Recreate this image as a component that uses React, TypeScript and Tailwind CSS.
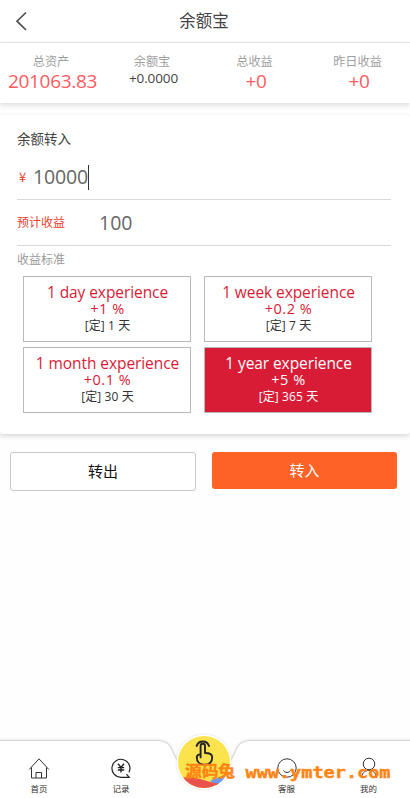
import React, { useState } from "react";

const FONT = "font-['Open_Sans','Noto_Sans_CJK_SC',sans-serif]";

type Stat = { label: string; value: string; plain?: boolean };

const stats: Stat[] = [
  { label: "总资产", value: "201063.83" },
  { label: "余额宝", value: "+0.0000", plain: true },
  { label: "总收益", value: "+0" },
  { label: "昨日收益", value: "+0" },
];

const plans = [
  { name: "1 day experience", rate: "+1 %", term: "[定] 1 天" },
  { name: "1 week experience", rate: "+0.2 %", term: "[定] 7 天" },
  { name: "1 month experience", rate: "+0.1 %", term: "[定] 30 天" },
  { name: "1 year experience", rate: "+5 %", term: "[定] 365 天" },
];

function Header() {
  return (
    <header className="grid h-[43px] grid-cols-[44px_1fr_46px] items-center border-b border-[#e7e7e7] bg-white">
      <button className="pl-[15px]" aria-label="返回">
        <svg width="12" height="20" viewBox="0 0 12 20" fill="none" stroke="#505050" strokeWidth="1.7">
          <path d="M11 1.500 2 10.200 11 19" />
        </svg>
      </button>
      <h1 className="pb-px text-center text-[16.500px] leading-6 text-[#444]">余额宝</h1>
    </header>
  );
}

function Stats() {
  return (
    <section className="grid h-[60px] grid-cols-[105px_97px_108px_98px] bg-white pt-[10px] text-center shadow-[0_2px_5px_rgba(0,0,0,0.14)]">
      {stats.map((s) => (
        <div key={s.label} className="flex flex-col items-center whitespace-nowrap">
          <span className="h-[17px] pr-[3px] text-[12.200px] leading-[17px] text-[#a0a0a0]">{s.label}</span>
          {s.plain ? (
            <span className="text-[13.500px] leading-[17px] tracking-[-0.1px] text-[#444]">{s.value}</span>
          ) : (
            <span className="text-[19px] leading-[23px] tracking-[-0.3px] text-[#ff5b60]">{s.value}</span>
          )}
        </div>
      ))}
    </section>
  );
}

function Plans() {
  const [selected, setSelected] = useState(3);
  return (
    <div className="ml-[6px] grid grid-cols-[168px_168px] gap-x-[13px] gap-y-[5px]">
      {plans.map((p, i) => {
        const on = i === selected;
        return (
          <button
            key={p.name}
            onClick={() => setSelected(i)}
            className={
              "flex h-[66px] flex-col items-center border border-[#b9b9b9] pt-[7px] pl-px whitespace-nowrap " +
              (on ? "bg-[#d91c36] text-white" : "bg-white text-[#d91c36]")
            }
          >
            <span className="text-[15.500px] leading-[17px] tracking-[-0.08px]">{p.name}</span>
            <span className="text-[14.500px] leading-[15px] tracking-[0.5px]">{p.rate}</span>
            <span className={"pt-px text-[12px] leading-[17px] tracking-[0.1px] " + (on ? "text-white" : "text-[#333]")}>
              {p.term}
            </span>
          </button>
        );
      })}
    </div>
  );
}

function HomeIcon() {
  return (
    <svg width="22" height="22" viewBox="0 0 22 22" fill="none" stroke="#333" strokeWidth="1">
      <path d="M1.200 12.500 11 1.800l9.800 10.700M3.500 10.500V21h15V10.500M8 21v-5.500h5.500V21" />
    </svg>
  );
}

function RecordIcon() {
  return (
    <svg width="22" height="22" viewBox="0 0 22 22" fill="none" stroke="#222" strokeWidth="1.200">
      <path d="M19 15.300A9 9 0 1 0 11 20.300h8.200l-2.800-3.200" />
      <path d="m8 6.800 3 3.700 3-3.700M11 10.500v5M7.800 10.600h6.400M7.800 13h6.400" strokeWidth="1.400" />
    </svg>
  );
}

function ServiceIcon() {
  return (
    <svg width="22" height="22" viewBox="0 0 22 22" fill="none" stroke="#333" strokeWidth="1">
      <circle cx="11" cy="11" r="9.200" />
      <path d="M7.500 13.500c1 2.600 6 2.600 7 0" />
    </svg>
  );
}

function MeIcon() {
  return (
    <svg width="22" height="22" viewBox="0 0 22 22" fill="none" stroke="#333" strokeWidth="1">
      <circle cx="11" cy="7" r="5.800" />
      <path d="M3.500 21c0-4 3-7.800 7.500-7.800s7.500 3.800 7.500 7.800" />
    </svg>
  );
}

function Tab({ icon, label }: { icon: React.ReactNode; label: string }) {
  return (
    <a className="flex flex-col items-center gap-[4px] pt-[21px]">
      {icon}
      <span className="text-[8.500px] leading-[12px] text-[#333]">{label}</span>
    </a>
  );
}

function TouchBadge() {
  return (
    <svg width="56" height="56" viewBox="0 0 56 56" className="drop-shadow-[0_0_1px_rgba(0,0,0,0.15)]">
      <defs>
        <clipPath id="disc">
          <circle cx="28" cy="28" r="26" />
        </clipPath>
      </defs>
      <circle cx="28" cy="28" r="27.500" fill="#fff" />
      <g clipPath="url(#disc)">
        <path d="M0 0h56v56H0z" fill="#fbe34d" />
        <path d="M34 47q8-5 18-5l-6 14z" fill="#6b9cf0" />
        <path d="M0 44q16-2 26 1.500T44 50v6H0z" fill="#e9534b" />
      </g>
      <g fill="none" stroke="#222" strokeWidth="1.900" strokeLinecap="round" strokeLinejoin="round">
        <path d="M20.600 12a6.500 6.500 0 0 1 12.400 0" />
        <path d="M24.600 22V12a2.200 2.200 0 0 1 4.400 0v7c4.500 0 7.200.8 7.200 4.200 0 5.200-3 7.600-7.800 7.600s-7.600-3.200-7.600-7.400c0-2 1.800-3.200 3.800-3v3" />
      </g>
    </svg>
  );
}

function TabBar() {
  return (
    <nav className="relative h-[62px]">
      <svg className="absolute inset-x-0 -top-[4px]" width="410" height="66" viewBox="0 0 410 66">
        <path
          d="M-2 8.500H156C173 8.500 171 19 177 28C183 43 191 56 204 56S225 43 231 28C237 19 235 8.500 252 8.500H412V70H-2Z"
          fill="#fff"
          stroke="#d6d6d6"
          strokeWidth="1.100"
          className="drop-shadow-[0_-1px_1px_rgba(0,0,0,0.07)]"
        />
      </svg>
      <div className="relative grid grid-cols-[78px_86px_80px_85px_79px]">
        <Tab icon={<HomeIcon />} label="首页" />
        <Tab icon={<RecordIcon />} label="记录" />
        <span />
        <Tab icon={<ServiceIcon />} label="客服" />
        <Tab icon={<MeIcon />} label="我的" />
      </div>
      <div className="absolute -top-[2px] left-[176px]">
        <TouchBadge />
      </div>
      <svg
        className="absolute top-[22px] left-[180px] font-['DejaVu_Sans_Mono','Noto_Sans_CJK_SC',monospace] font-bold"
        width="220"
        height="26"
        viewBox="0 0 220 26"
        fill="#ff8412"
        stroke="#ff8412"
        strokeWidth="0.400"
      >
        <text x="5" y="19" fontSize="15.500" textLength="50" lengthAdjust="spacingAndGlyphs">
          源码兔
        </text>
        <text x="65.500" y="20" fontSize="16" textLength="145" lengthAdjust="spacingAndGlyphs">
          www.ymter.com
        </text>
      </svg>
    </nav>
  );
}

export default function App() {
  return (
    <main className={"flex h-[798px] w-[410px] flex-col overflow-hidden bg-[#fefefe] " + FONT}>
      <Header />
      <Stats />
      <section className="mt-[12px] h-[319px] rounded-[3px] bg-white px-[17px] pt-[14px] shadow-[0_2px_5px_rgba(0,0,0,0.16)]">
        <h2 className="text-[13.500px] leading-[20px] text-[#444]">余额转入</h2>
        <div className="mt-[8px] flex h-[43px] w-[374px] items-center border-b border-[#d9d9d9]">
          <span className="w-[16px] pb-[2px] pl-[2px] font-['Noto_Sans_CJK_SC',sans-serif] text-[13px] text-[#e8412f]">¥</span>
          <span className="pb-[2px] text-[19.500px] leading-[24px] tracking-[-0.15px] text-[#666]">10000</span>
          <span className="mb-px h-[25px] w-px bg-[#333]" />
        </div>
        <div className="flex h-[46px] w-[374px] items-center border-b border-[#d9d9d9]">
          <span className="w-[82px] text-[12px] text-[#e8412f]">预计收益</span>
          <span className="text-[19.500px] leading-[24px] text-[#666]">100</span>
        </div>
        <p className="h-[30px] pt-[4px] text-[12px] leading-[19px] text-[#999]">收益标准</p>
        <Plans />
      </section>
      <div className="mt-[18px] flex items-start gap-[16px] px-[10px] text-[15px]">
        <button className="h-[39px] w-[186px] rounded-[3px] border border-[#c9c9c9] bg-white text-[#111]">转出</button>
        <button className="h-[37px] w-[185px] rounded-[3px] bg-[#ff6226] text-white">转入</button>
      </div>
      <div className="flex-1" />
      <TabBar />
    </main>
  );
}
